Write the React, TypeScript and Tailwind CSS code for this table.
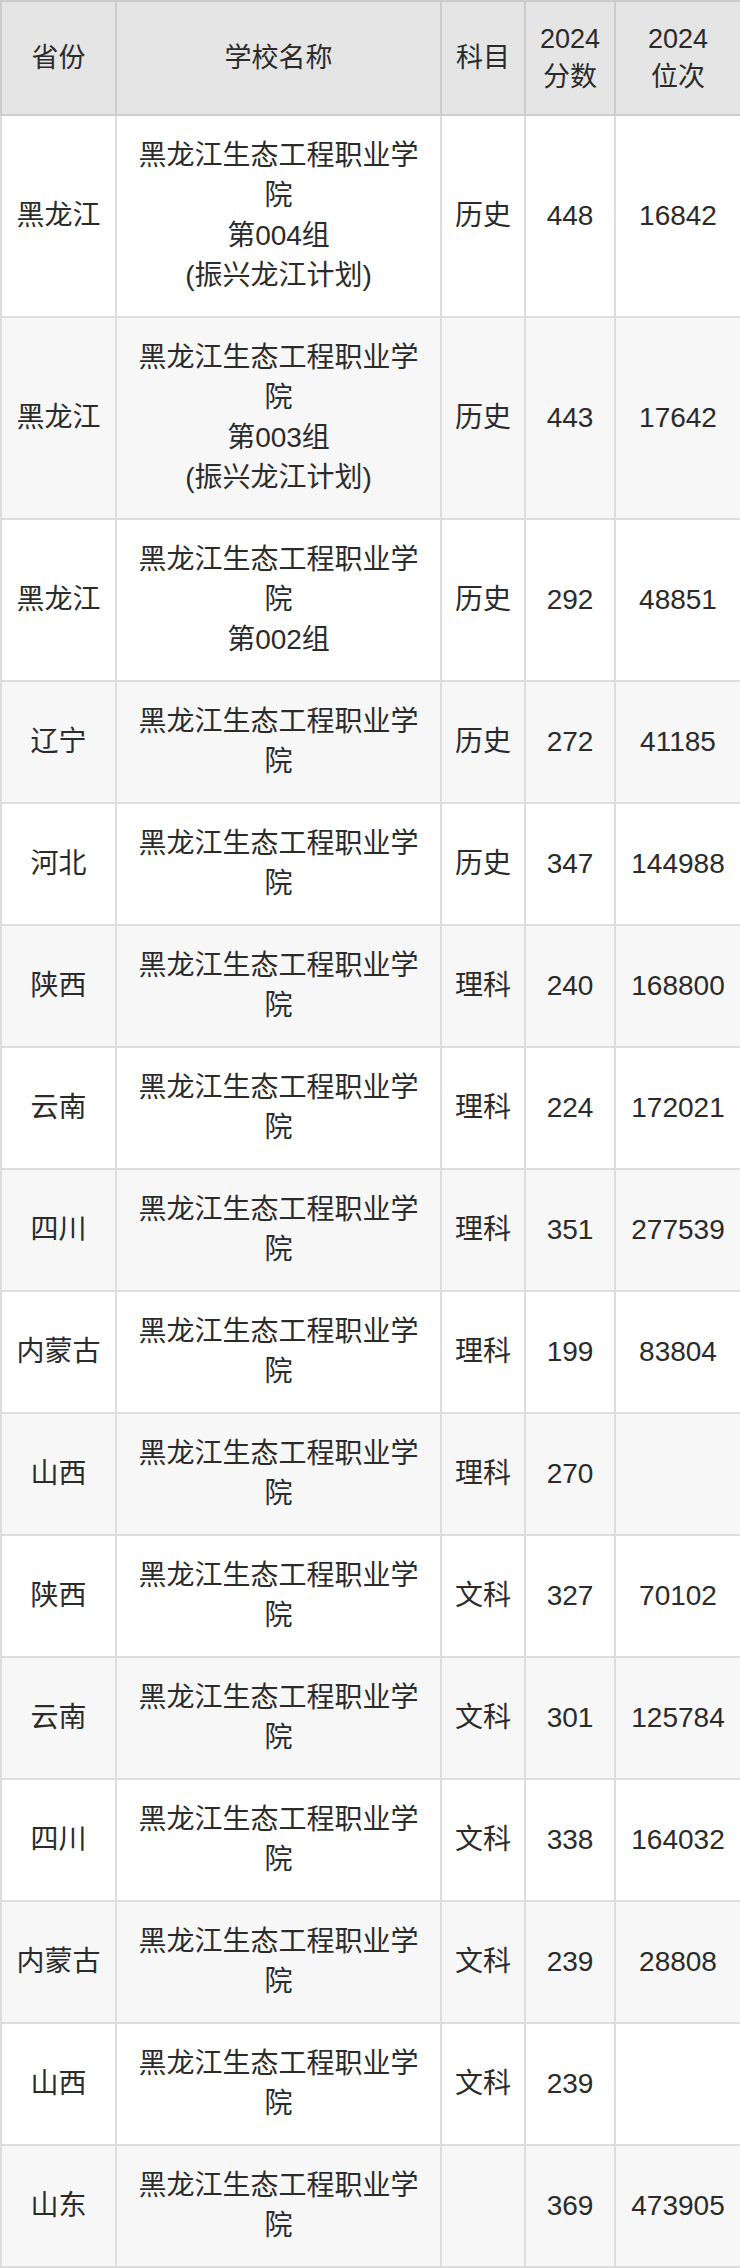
const rows: [string, string[], string, string, string][] = [
  ['黑龙江', ['黑龙江生态工程职业学院', '第004组', '(振兴龙江计划)'], '历史', '448', '16842'],
  ['黑龙江', ['黑龙江生态工程职业学院', '第003组', '(振兴龙江计划)'], '历史', '443', '17642'],
  ['黑龙江', ['黑龙江生态工程职业学院', '第002组'], '历史', '292', '48851'],
  ['辽宁', ['黑龙江生态工程职业学院'], '历史', '272', '41185'],
  ['河北', ['黑龙江生态工程职业学院'], '历史', '347', '144988'],
  ['陕西', ['黑龙江生态工程职业学院'], '理科', '240', '168800'],
  ['云南', ['黑龙江生态工程职业学院'], '理科', '224', '172021'],
  ['四川', ['黑龙江生态工程职业学院'], '理科', '351', '277539'],
  ['内蒙古', ['黑龙江生态工程职业学院'], '理科', '199', '83804'],
  ['山西', ['黑龙江生态工程职业学院'], '理科', '270', ''],
  ['陕西', ['黑龙江生态工程职业学院'], '文科', '327', '70102'],
  ['云南', ['黑龙江生态工程职业学院'], '文科', '301', '125784'],
  ['四川', ['黑龙江生态工程职业学院'], '文科', '338', '164032'],
  ['内蒙古', ['黑龙江生态工程职业学院'], '文科', '239', '28808'],
  ['山西', ['黑龙江生态工程职业学院'], '文科', '239', ''],
  ['山东', ['黑龙江生态工程职业学院'], '', '369', '473905'],
]

const th = 'border-2 border-[#cccccc] px-1 py-[18px] text-center align-middle font-normal'
const td = 'border-2 border-[#dddddd] px-1 py-5 text-center align-middle'

export default function App() {
  return (
    <div className="w-[740px] bg-white text-[#2b2b2b] font-['Liberation_Sans','Noto_Sans_CJK_SC',sans-serif]">
      <table className="w-[740px] table-fixed border-collapse">
        <colgroup>
          <col className="w-[115px]" />
          <col className="w-[325px]" />
          <col className="w-[84px]" />
          <col className="w-[90px]" />
          <col className="w-[126px]" />
        </colgroup>
        <thead>
          <tr className="bg-[#e5e5e5] text-[27px] leading-[38px]">
            <th className={th}>省份</th>
            <th className={th}>学校名称</th>
            <th className={th}>科目</th>
            <th className={th}>
              2024
              <br />
              分数
            </th>
            <th className={th}>
              2024
              <br />
              位次
            </th>
          </tr>
        </thead>
        <tbody className="text-[28px] leading-[40px]">
          {rows.map(([prov, name, subj, score, rank], i) => (
            <tr key={i} className={i % 2 === 1 ? 'bg-[#f7f7f7]' : 'bg-white'}>
              <td className={td}>{prov}</td>
              <td className={`${td} px-[14px]`}>
                {name.map((line, j) => (
                  <div key={j}>{line}</div>
                ))}
              </td>
              <td className={td}>{subj}</td>
              <td className={td}>{score}</td>
              <td className={td}>{rank}</td>
            </tr>
          ))}
        </tbody>
      </table>
    </div>
  )
}
